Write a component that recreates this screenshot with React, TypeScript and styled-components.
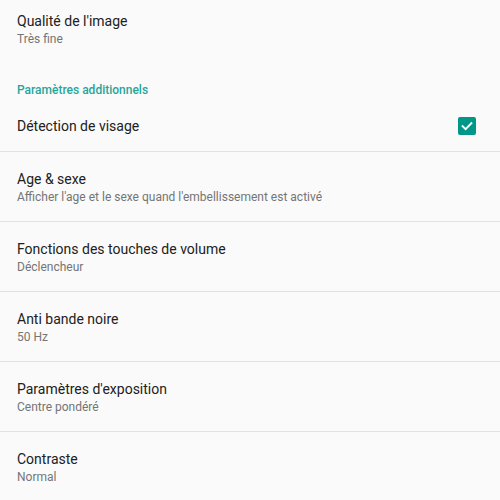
import React from "react";
import styled, { createGlobalStyle } from "styled-components";

const Global = createGlobalStyle`
  html, body { margin: 0; padding: 0; background: #fafafa; }
  body { font-family: Roboto, "Noto Sans", sans-serif; -webkit-font-smoothing: antialiased; }
`;

const Screen = styled.div`
  width: 500px;
  height: 500px;
  overflow: hidden;
  background: #fafafa;
  display: flex;
  flex-direction: column;
`;

const Row = styled.div<{ $first?: boolean; $divider?: boolean }>`
  display: flex;
  flex-direction: column;
  padding: ${(p) => (p.$first ? "11px" : "17px")} 24px 16px 17px;
  border-bottom: ${(p) => (p.$divider ? "1px solid #e2e2e2" : "none")};
  flex-shrink: 0;
`;

const CheckRow = styled.div`
  display: flex;
  align-items: center;
  justify-content: space-between;
  height: 50px;
  padding: 0 24px 0 17px;
  border-bottom: 1px solid #e2e2e2;
  flex-shrink: 0;
`;

const Title = styled.div`
  font-size: 14px;
  line-height: 20px;
  color: #212121;
`;

const Subtitle = styled.div`
  font-size: 12px;
  line-height: 16px;
  color: #757575;
`;

const SectionHeader = styled.div`
  font-size: 12px;
  font-weight: 500;
  line-height: 20px;
  color: #26a69a;
  padding: 17px 17px 1px;
  flex-shrink: 0;
`;

const Box = styled.div`
  width: 18px;
  height: 18px;
  border-radius: 2px;
  background: #009688;
  display: flex;
  align-items: center;
  justify-content: center;
`;

const Check = () => (
  <Box>
    <svg width="14" height="14" viewBox="0 0 14 14">
      <path d="M2.6 7.2 L5.6 10.1 L11.4 4.2" fill="none" stroke="#fff" strokeWidth="1.9" strokeLinecap="square" />
    </svg>
  </Box>
);

const items = [
  { t: "Age & sexe", s: "Afficher l'age et le sexe quand l'embellissement est activé" },
  { t: "Fonctions des touches de volume", s: "Déclencheur" },
  { t: "Anti bande noire", s: "50 Hz" },
  { t: "Paramètres d'exposition", s: "Centre pondéré" },
  { t: "Contraste", s: "Normal" },
];

export default function App() {
  return (
    <>
      <Global />
      <Screen>
        <Row $first>
          <Title>Qualité de l'image</Title>
          <Subtitle>Très fine</Subtitle>
        </Row>
        <SectionHeader>Paramètres additionnels</SectionHeader>
        <CheckRow>
          <Title>Détection de visage</Title>
          <Check />
        </CheckRow>
        {items.map((it) => (
          <Row key={it.t} $divider>
            <Title>{it.t}</Title>
            <Subtitle>{it.s}</Subtitle>
          </Row>
        ))}
      </Screen>
    </>
  );
}
